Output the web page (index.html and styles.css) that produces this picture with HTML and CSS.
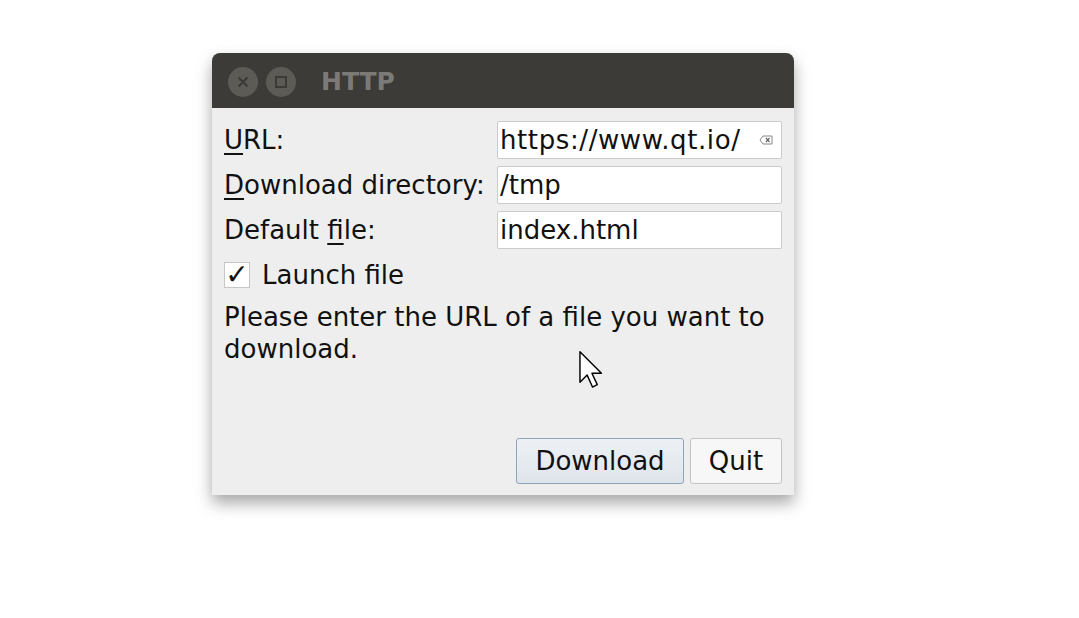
FILE: index.html
```html
<!DOCTYPE html>
<html lang="en">
<head>
    <meta charset="UTF-8">
    <title>HTTP</title>
    <link rel="stylesheet" href="styles.css">
</head>
<body>
    <div class="window">
        <div class="titlebar">
            <span class="wbtn">
                <svg width="30" height="30" viewBox="0 0 30 30"><circle cx="15" cy="15" r="15" fill="#5c5b56"/><path d="M10.5 10.5 L19.5 19.5 M19.5 10.5 L10.5 19.5" stroke="#3b3a36" stroke-width="2"/></svg>
            </span>
            <span class="wbtn">
                <svg width="30" height="30" viewBox="0 0 30 30"><circle cx="15" cy="15" r="15" fill="#5c5b56"/><rect x="10" y="10" width="10" height="10" fill="none" stroke="#3b3a36" stroke-width="2"/></svg>
            </span>
            <span class="title">HTTP</span>
        </div>
        <div class="content">
            <div class="form">
                <label><u>U</u>RL:</label>
                <div class="field">
                    <span class="url">https://www.qt.io/</span>
                    <svg class="clear" width="14" height="10" viewBox="0 0 14 10"><path d="M4 1 H13 V9 H4 L1 5 Z" fill="#fff" stroke="#888" stroke-width="1"/><path d="M7 3 L10.5 7 M10.5 3 L7 7" stroke="#666" stroke-width="1.2"/></svg>
                </div>
                <label><u>D</u>ownload directory:</label>
                <div class="field"><span>/tmp</span></div>
                <label>Default <u>f</u>ile:</label>
                <div class="field"><span>index.html</span></div>
            </div>
            <div class="check">
                <span class="box">&#10003;</span>
                <span>Launch file</span>
            </div>
            <p class="status">Please enter the URL of a file you want to download.</p>
            <div class="buttons">
                <button class="btn default">Download</button>
                <button class="btn quit">Quit</button>
            </div>
        </div>
    </div>
    <svg class="cursor" width="29" height="43" viewBox="0 0 24 36"><path d="M1.5 1.5 V27 L7.5 21 L12 31 L16 29 L11.5 19.5 L19.5 19.5 Z" fill="#fff" stroke="#000" stroke-width="1.2" stroke-linejoin="round"/></svg>
</body>
</html>
```

FILE: styles.css
```css
/* Qt http example window, Ubuntu theme */
body {
    margin: 0;
    padding-bottom: 80px;
    background: #fff;
    font-family: "DejaVu Sans", "Noto Sans", sans-serif;
    color: #111;
}

.window {
    width: 582px;
    margin: 53px 0 0 212px;
    background-color: #eeeeee;
    border-radius: 8px 8px 0 0;
    box-shadow: 0 8px 16px rgba(0, 0, 0, 0.35);
}

.titlebar {
    height: 55px;
    box-sizing: border-box;
    padding: 2px 0 0 16px;
    background-color: #3c3b37;
    border-radius: 8px 8px 0 0;
    display: flex;
    align-items: center;
    gap: 8px;
}

.wbtn {
    display: flex;
}

.title {
    margin-left: 17px;
    font-weight: bold;
    font-size: 25px;
    color: #7b7a76;
}

.content {
    padding: 13px 12px 11px 12px;
    font-size: 26px;
}

.form {
    display: grid;
    grid-template-columns: 273px 1fr;
    row-gap: 7px;
    align-items: center;
}

label u {
    text-decoration-thickness: 2px;
    text-underline-offset: 4px;
}

.field {
    height: 36px;
    background: #fff;
    border: 1px solid #cbcbcb;
    border-radius: 2px;
    display: flex;
    align-items: center;
    justify-content: space-between;
    padding: 0 8px 0 2px;
}

.url {
    letter-spacing: 0.6px;
}

.check {
    display: flex;
    align-items: center;
    gap: 12px;
    height: 30px;
    margin-top: 11px;
}

.box {
    width: 24px;
    height: 24px;
    border: 1px solid #c6c6c6;
    background: #fff;
    display: flex;
    align-items: center;
    justify-content: center;
    font-size: 28px;
    font-weight: bold;
    line-height: 1;
}

.status {
    margin: 11px 0 0 0;
    line-height: 32px;
    width: 560px;
}

.buttons {
    display: flex;
    justify-content: flex-end;
    gap: 6px;
    margin-top: 73px;
}

.btn {
    font-family: inherit;
    font-size: 26px;
    height: 46px;
    padding: 0;
    background: #f7f7f7;
    border: 1px solid #c4c4c4;
    border-radius: 3px;
    color: #111;
}

.btn.default {
    width: 168px;
    background: linear-gradient(#edf1f5, #dfe5eb);
    border-color: #8ea4bb;
}

.btn.quit {
    width: 92px;
}

.cursor {
    position: absolute;
    left: 578px;
    top: 350px;
}
```
